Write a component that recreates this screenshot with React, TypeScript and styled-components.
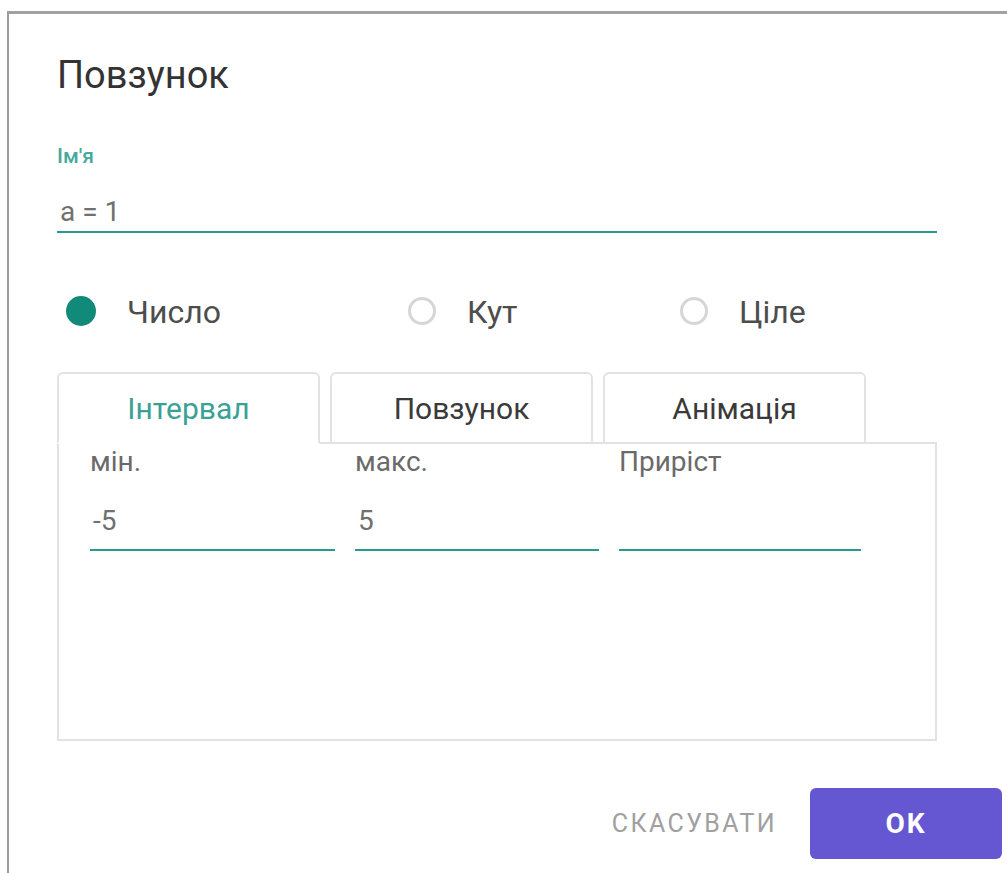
import React from "react";
import styled, { createGlobalStyle } from "styled-components";

const GlobalStyle = createGlobalStyle`
  html, body {
    margin: 0;
    padding: 0;
    background: #ffffff;
  }
  body {
    font-family: Roboto, "Noto Sans", "Liberation Sans", sans-serif;
    color: #333;
  }
  * { box-sizing: border-box; }
`;

const Page = styled.div`
  width: 1007px;
  height: 873px;
  padding: 11px 0 0 7px;
  overflow: hidden;
`;

const Dialog = styled.div`
  height: 862px;
  background: #fff;
  border-top: 3px solid #a2a2a2;
  border-left: 2px solid #9c9c9c;
  padding: 41px 5px 0 48px;
  display: flex;
  flex-direction: column;
`;

const Body = styled.div`
  width: 880px;
  display: flex;
  flex-direction: column;
`;

const Title = styled.h1`
  margin: 0;
  font-size: 38px;
  line-height: 40px;
  font-weight: 400;
  color: #333;
`;

const FieldLabel = styled.div`
  margin-top: 49px;
  font-size: 21px;
  line-height: 24px;
  font-weight: 500;
  color: #45aa9d;
`;

const NameInput = styled.div`
  margin-top: 28px;
  padding: 0 0 3px 3px;
  font-size: 28px;
  line-height: 32px;
  color: #707070;
  border-bottom: 2px solid #2a9a8c;
`;

const RadioRow = styled.div`
  margin-top: 59px;
  padding-left: 9px;
  display: grid;
  grid-template-columns: 342px 272px auto;
  align-items: center;
`;

const RadioOption = styled.label`
  display: flex;
  align-items: center;
  gap: 31px;
  font-size: 32px;
  line-height: 40px;
  color: #4d4d4d;
`;

const RadioDot = styled.span<{ $checked?: boolean }>`
  flex: none;
  width: ${(p) => (p.$checked ? 30 : 28)}px;
  height: ${(p) => (p.$checked ? 30 : 28)}px;
  margin-top: -2px;
  border-radius: 50%;
  background: ${(p) => (p.$checked ? "#128a7a" : "#fff")};
  border: ${(p) => (p.$checked ? "none" : "3px solid #d6d6d6")};
`;

const TabBar = styled.div`
  margin-top: 40px;
  display: flex;
  gap: 10px;
  position: relative;
  z-index: 1;
`;

const Tab = styled.div<{ $active?: boolean }>`
  width: 263px;
  height: 72px;
  display: flex;
  align-items: center;
  justify-content: center;
  padding-bottom: 0;
  font-size: 30px;
  color: ${(p) => (p.$active ? "#3aa194" : "#3a3a3a")};
  background: #fff;
  border: 2px solid #e2e2e2;
  border-bottom-color: ${(p) => (p.$active ? "#fff" : "#e2e2e2")};
  border-radius: 6px 6px 0 0;
`;

const Panel = styled.div`
  margin-top: -2px;
  height: 299px;
  border: 2px solid #e2e2e2;
  padding: 2px 0 0 31px;
`;

const RangeGrid = styled.div`
  display: grid;
  grid-template-columns: 245px 244px 242px;
  column-gap: 20px;
`;

const RangeField = styled.div`
  display: flex;
  flex-direction: column;
`;

const RangeLabel = styled.div`
  font-size: 28px;
  line-height: 32px;
  color: #6a6a6a;
`;

const RangeValue = styled.div`
  margin-top: 27px;
  height: 46px;
  padding: 0 0 12px 3px;
  font-size: 28px;
  line-height: 32px;
  color: #707070;
  border-bottom: 2px solid #2a9a8c;
`;

const Footer = styled.div`
  margin-top: 47px;
  display: flex;
  justify-content: flex-end;
  align-items: center;
  gap: 33px;
`;

const CancelButton = styled.button`
  border: none;
  background: none;
  padding: 0;
  font-family: inherit;
  font-size: 25px;
  letter-spacing: 2.4px;
  color: #a0a0a0;
  text-transform: uppercase;
  cursor: pointer;
`;

const OkButton = styled.button`
  width: 192px;
  height: 71px;
  border: none;
  border-radius: 6px;
  background: #6557d2;
  color: #fff;
  font-family: inherit;
  font-size: 28px;
  font-weight: 700;
  letter-spacing: 2px;
  cursor: pointer;
`;

const kinds = [
  { label: "Число", checked: true },
  { label: "Кут", checked: false },
  { label: "Ціле", checked: false },
];

const tabs = ["Інтервал", "Повзунок", "Анімація"];

const ranges = [
  { label: "мін.", value: "-5" },
  { label: "макс.", value: "5" },
  { label: "Приріст", value: "" },
];

export default function App() {
  return (
    <>
      <GlobalStyle />
      <Page>
        <Dialog>
          <Body>
            <Title>Повзунок</Title>
            <FieldLabel>Ім'я</FieldLabel>
            <NameInput>a = 1</NameInput>
            <RadioRow>
              {kinds.map((k) => (
                <RadioOption key={k.label}>
                  <RadioDot $checked={k.checked} />
                  {k.label}
                </RadioOption>
              ))}
            </RadioRow>
            <TabBar>
              {tabs.map((t, i) => (
                <Tab key={t} $active={i === 0}>
                  {t}
                </Tab>
              ))}
            </TabBar>
            <Panel>
              <RangeGrid>
                {ranges.map((r) => (
                  <RangeField key={r.label}>
                    <RangeLabel>{r.label}</RangeLabel>
                    <RangeValue>{r.value}</RangeValue>
                  </RangeField>
                ))}
              </RangeGrid>
            </Panel>
          </Body>
          <Footer>
            <CancelButton>Скасувати</CancelButton>
            <OkButton>OK</OkButton>
          </Footer>
        </Dialog>
      </Page>
    </>
  );
}
